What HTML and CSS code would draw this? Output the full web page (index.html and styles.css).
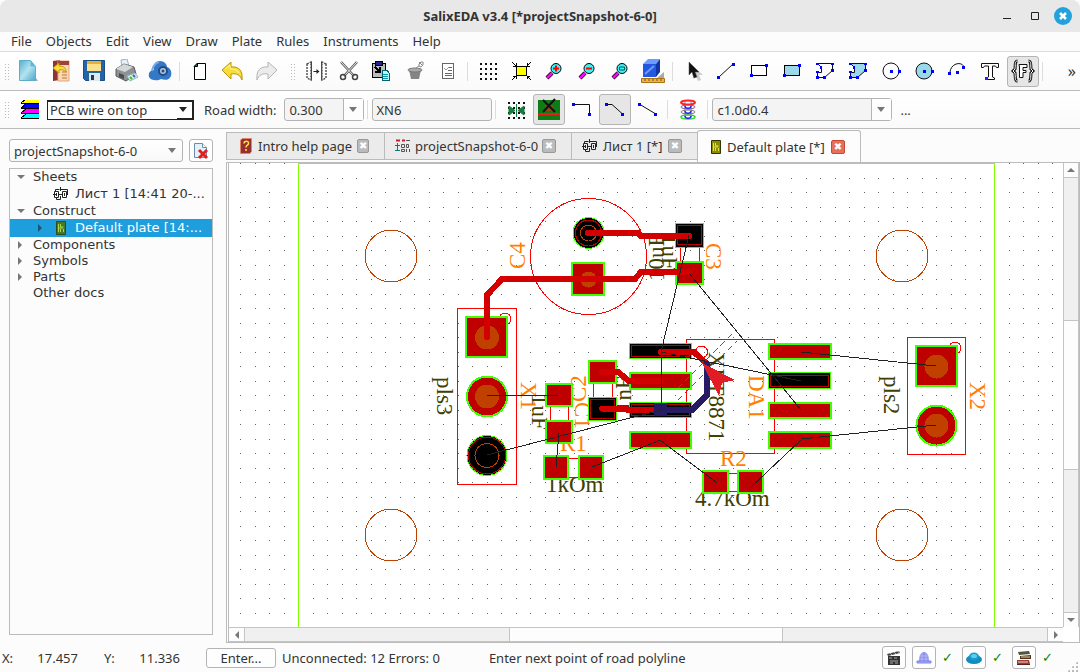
FILE: index.html
```html
<!DOCTYPE html>
<html lang="en">
<head>
<meta charset="UTF-8">
<meta name="viewport" content="width=device-width, initial-scale=1.0">
<title>SalixEDA v3.4 [*projectSnapshot-6-0]</title>
<link rel="stylesheet" href="styles.css">
</head>
<body>
<div class="window">

  <header class="titlebar">
    <h1>SalixEDA v3.4 [*projectSnapshot-6-0]</h1>
    <div class="window-buttons">
      <button type="button" aria-label="Minimize"><svg width="20" height="20"><path d="M6 12.500h8" stroke="#222" fill="none"/></svg></button>
      <button type="button" aria-label="Maximize"><svg width="20" height="20"><path d="M6.500 6.500h7v7h-7z" stroke="#222" fill="none"/></svg></button>
      <button type="button" aria-label="Close"><svg width="20" height="20"><circle cx="10" cy="10" r="9" fill="#22a2dd"/><path d="M7 7l6 6M13 7l-6 6" stroke="#fff" stroke-width="2.500"/></svg></button>
    </div>
  </header>

  <nav class="menubar">
    <button type="button">File</button>
    <button type="button">Objects</button>
    <button type="button">Edit</button>
    <button type="button">View</button>
    <button type="button">Draw</button>
    <button type="button">Plate</button>
    <button type="button">Rules</button>
    <button type="button">Instruments</button>
    <button type="button">Help</button>
  </nav>

  <!-- Main toolbar -->
  <div class="toolbar">
    <span class="grip"></span>
    <button type="button" class="tool" aria-label="New"><svg viewBox="0 0 24 24"><defs><linearGradient id="gNew" x1="0" y1="0" x2="1" y2="1"><stop offset="0" stop-color="#58aecb"/><stop offset=".5" stop-color="#b4e3ef"/><stop offset="1" stop-color="#4ca5cc"/></linearGradient></defs><path d="M5 22h17l-2-3z" fill="#aaa"/><path d="M3.500 1.500h11l5 6v14h-16z" fill="url(#gNew)" stroke="#5cadc9"/><path d="M14.500 1.500v6h5z" fill="#5ab8dc"/></svg></button>
    <button type="button" class="tool" aria-label="Open"><svg viewBox="0 0 24 24"><path d="M4 2l7-1v20l-7 1z" fill="#8e3434"/><path d="M9 2h11v20H9z" fill="#f3dcb2" stroke="#e9a27c"/><path d="M9 2h11v4H9z" fill="#9c4438"/><path d="M13 13h5M13 16h5M13 19h5" stroke="#c96b3a"/><path d="M4 9l6-5v3c5 0 7 2 7 6-2-2-4-3-7-2v3z" fill="#ffe135" stroke="#c9921a"/></svg></button>
    <button type="button" class="tool" aria-label="Save"><svg viewBox="0 0 24 24"><path d="M1.500 1.500h21v20h-19l-2-2z" fill="#2465a8" stroke="#1c4d84"/><path d="M5 2h14v10H5z" fill="#ffe08a"/><path d="M5 2h14v3H5z" fill="#e0b23c"/><path d="M7 14h11v8H7z" fill="#dfe8ee"/><path d="M9 16h3v5H9z" fill="#26384e"/></svg></button>
    <button type="button" class="tool" aria-label="Print"><svg viewBox="0 0 24 24"><path d="M6 1l6-1 2 7-7 2z" fill="#e8f1f8" stroke="#95b4cc"/><path d="M1 10l8-5 10 3 2 7-10 7-10-5z" fill="#8e9294" stroke="#55595b"/><path d="M1 10l8-5 9 3-8 5z" fill="#d5d8d9"/><path d="M4 14l5 2v4l-5-2z" fill="#4a4d4f"/><path d="M12 17l8-3 3 4-8 4z" fill="#dbe9ef" stroke="#8ba"/><path d="M15 18l2 2" stroke="#36bd35" stroke-width="2"/><path d="M18 16l2 2" stroke="#5656dd" stroke-width="2"/></svg></button>
    <button type="button" class="tool" aria-label="Cloud"><svg viewBox="0 0 24 24"><path d="M1 18c-1-5 2-7 5-7C5 5 8 2 12 2c4 0 7 3 7 6 4 1 5 6 4 9-2 5-7 4-10 3-3 2-10 2-12-2z" fill="#3478c8"/><path d="M4 12c1-6 3-8 7-9" stroke="#75aae2" stroke-width="2" fill="none"/><circle cx="15" cy="12" r="4" fill="#b3c8dd" stroke="#234c82" stroke-width="2"/><circle cx="15" cy="12" r="1.500" fill="#234c82"/></svg></button>
    <span class="sep"></span>
    <button type="button" class="tool" aria-label="Blank page"><svg viewBox="0 0 24 24"><path d="M9.500 4.500h8v16h-11v-13z" fill="#fff" stroke="#000"/><path d="M6 7.500L9.500 4v3.500z" fill="#087f7f" stroke="#000"/></svg></button>
    <button type="button" class="tool" aria-label="Undo"><svg viewBox="0 0 24 24"><path d="M1 11l9-8v5c8-1 12 4 11 13-2-5-5-7-11-6v5z" fill="#f8dd35" stroke="#b99308"/><path d="M4 10l5-4v4c5 0 7 1 9 4" stroke="#fff6a0" fill="none"/></svg></button>
    <button type="button" class="tool" aria-label="Redo"><svg viewBox="0 0 24 24"><path d="M23 11l-9-8v5C6 7 2 12 3 21c2-5 5-7 11-6v5z" fill="#ececec" stroke="#b4b4b4"/></svg></button>
    <span class="grip"></span>
    <button type="button" class="tool" aria-label="Mirror"><svg viewBox="0 0 24 24"><path d="M3 5l4-2v18l-4-2z" fill="none" stroke="#555" stroke-width="1.500" stroke-dasharray="2 1"/><path d="M7.500 3v18M17.500 3v18" stroke="#444"/><path d="M22 5l-4-2v18l4-2z" fill="none" stroke="#555" stroke-width="1.500" stroke-dasharray="2 1"/><path d="M9.500 12.500h4" stroke="#222"/><path d="M12.500 10l3 2.500-3 2.500z" fill="#222"/></svg></button>
    <button type="button" class="tool" aria-label="Cut"><svg viewBox="0 0 24 24"><path d="M4 3l13 14M20 3L7 17" stroke="#555" stroke-width="2.500"/><path d="M4 3l13 14M20 3L7 17" stroke="#eee" stroke-width="1"/><circle cx="6" cy="18" r="2.500" fill="none" stroke="#444" stroke-width="1.500"/><circle cx="18" cy="18" r="2.500" fill="none" stroke="#444" stroke-width="1.500"/></svg></button>
    <button type="button" class="tool" aria-label="Paste"><svg viewBox="0 0 24 24" shape-rendering="crispEdges"><path d="M2 4h13v14H2z" fill="#bdbdbd" stroke="#000"/><path d="M5 2h7v4H5z" fill="#23238e" stroke="#000"/><path d="M5 8l4 4M10 8v5H5" stroke="#000" stroke-width="2" fill="none"/><path d="M12 11h5l2 3v7h-7z" fill="#b9f5fa" stroke="#00646e"/><path d="M13 15h5M13 17h5M13 19h5" stroke="#0a9ab0"/></svg></button>
    <button type="button" class="tool" aria-label="Delete"><svg viewBox="0 0 24 24"><path d="M6 11h12l-2 9H8z" fill="#858585"/><ellipse cx="12" cy="11" rx="7" ry="2" fill="#aaa" stroke="#777"/><path d="M13 9l3-2M16 5l2-2h2v3l-2 2-2-1zM16 3l4 4" fill="none" stroke="#888"/></svg></button>
    <button type="button" class="tool" aria-label="Properties"><svg viewBox="0 0 24 24" shape-rendering="crispEdges"><path d="M6.500 4.500h11v15h-11z" fill="#fff" stroke="#666"/><path d="M12 8.500h4M12 11.500h4M9 14.500h7M9 16.500h7" stroke="#666"/><path d="M8 9l2 2 3-3" fill="none" stroke="#999"/></svg></button>
    <span class="sep"></span>
    <button type="button" class="tool" aria-label="Grid"><svg viewBox="0 0 24 24"><path d="M4 5h17M4 10h17M4 15h17M4 20h17" stroke="#111" stroke-width="2" stroke-dasharray="2 3"/></svg></button>
    <button type="button" class="tool" aria-label="Fit"><svg viewBox="0 0 24 24" shape-rendering="crispEdges"><path d="M7.500 7.500h10v9h-10z" fill="#ff0" stroke="#000"/><path d="M3 3l4 4M22 3l-4 4M3 21l4-4M22 21l-4-4M4 7h3V4M18 4v3h3M4 17h3v3M21 17h-3v3" stroke="#000" fill="none"/></svg></button>
    <button type="button" class="tool" aria-label="Zoom in"><svg viewBox="0 0 24 24"><path d="M10 14l-5 5" stroke="#000" stroke-width="4"/><path d="M10 14l-5 5" stroke="#f0f" stroke-width="2.500"/><circle cx="14" cy="9.500" r="5" fill="#3df2f6" stroke="#000"/><path d="M11 9.500h6M14 6.500v6" stroke="#f00" stroke-width="2"/></svg></button>
    <button type="button" class="tool" aria-label="Zoom out"><svg viewBox="0 0 24 24"><path d="M10 14l-5 5" stroke="#000" stroke-width="4"/><path d="M10 14l-5 5" stroke="#f0f" stroke-width="2.500"/><circle cx="14" cy="9.500" r="5" fill="#3df2f6" stroke="#000"/><path d="M11 9.500h6" stroke="#f00" stroke-width="2"/></svg></button>
    <button type="button" class="tool" aria-label="Zoom area"><svg viewBox="0 0 24 24"><path d="M10 14l-5 5" stroke="#000" stroke-width="4"/><path d="M10 14l-5 5" stroke="#f0f" stroke-width="2.500"/><circle cx="14" cy="9.500" r="5" fill="#3df2f6" stroke="#000"/><path d="M11.500 8h5v3h-5z" stroke="#055" fill="#3df2f6"/></svg></button>
    <button type="button" class="tool" aria-label="3D view"><svg viewBox="0 0 24 24"><path d="M16 19l7-6v6z" fill="#aaa"/><path d="M2 5l5-5h12l-4 5z" fill="#6c9cff"/><path d="M2 5h13v13H2z" fill="#2458e0"/><path d="M15 5l4-5v13l-4 5z" fill="#1036a4"/><path d="M4 15L13 7" stroke="#6e9af5" stroke-width="2"/><path d="M.500 19.500h23v4H.500z" fill="#f0b43c" stroke="#a87414"/><path d="M4 20v2M8 20v2M12 20v2M16 20v2M20 20v2" stroke="#744"/></svg></button>
    <span class="sep"></span>
    <button type="button" class="tool" aria-label="Select"><svg viewBox="0 0 24 24"><path d="M11 6l1 14 3-3 2 5 3-1-2-5h4z" fill="#ccc"/><path d="M8 3v13l3-3 2 6 3-1-2-5h4z" fill="#111" stroke="#555" stroke-width=".500"/></svg></button>
    <button type="button" class="tool" aria-label="Line"><svg viewBox="0 0 24 24"><path d="M5 18L19 5" stroke="#111"/><path d="M3 17h3v3H3zM18 4h3v3h-3z" fill="#00f"/></svg></button>
    <button type="button" class="tool" aria-label="Rectangle"><svg viewBox="0 0 24 24" shape-rendering="crispEdges"><path d="M4.500 6.500h15v10h-15z" fill="#fff" stroke="#000"/><path d="M3 15h3v3H3zM18 5h3v3h-3z" fill="#00f"/></svg></button>
    <button type="button" class="tool" aria-label="Filled rectangle"><svg viewBox="0 0 24 24" shape-rendering="crispEdges"><path d="M4.500 6.500h15v10h-15z" fill="#99d9ea" stroke="#000"/><path d="M3 15h3v3H3zM18 5h3v3h-3z" fill="#00f"/></svg></button>
    <button type="button" class="tool" aria-label="Polygon"><svg viewBox="0 0 24 24"><path d="M4.500 4.500h15v7l-8 7h-7v-5h4v-5z" fill="none" stroke="#111"/><path d="M3 4h3v2H3zM18 4h3v2h-3zM18 10h3v3h-3zM10 17h3v3h-3zM3 17h3v3H3zM3 12h3v2H3zM7 7h2v3H7z" fill="#00f"/></svg></button>
    <button type="button" class="tool" aria-label="Filled polygon"><svg viewBox="0 0 24 24"><path d="M4.500 4.500h15v7l-8 7h-7v-5h4v-5z" fill="#99d9ea" stroke="#111"/><path d="M3 4h3v2H3zM18 4h3v2h-3zM18 10h3v3h-3zM10 17h3v3h-3zM3 17h3v3H3zM3 12h3v2H3zM7 7h2v3H7z" fill="#00f"/></svg></button>
    <button type="button" class="tool" aria-label="Circle"><svg viewBox="0 0 24 24"><circle cx="12" cy="12" r="8" fill="none" stroke="#111"/><path d="M11 11h3v3h-3zM19 11h3v3h-3z" fill="#00f"/></svg></button>
    <button type="button" class="tool" aria-label="Filled circle"><svg viewBox="0 0 24 24"><circle cx="12" cy="12" r="8" fill="#99d9ea" stroke="#111"/><path d="M11 11h3v3h-3zM19 11h3v3h-3z" fill="#00f"/></svg></button>
    <button type="button" class="tool" aria-label="Arc"><svg viewBox="0 0 24 24"><path d="M5 13c1-9 12-11 14-5" fill="none" stroke="#111"/><path d="M3 13h3v3H3zM11 12h3v3h-3zM17 7h3v3h-3z" fill="#00f"/></svg></button>
    <button type="button" class="tool" aria-label="Text"><svg viewBox="0 0 24 24"><path d="M3.500 4.500h17v4h-2l-1-1.500h-3v11l2 1v1.500h-8V19l2-1V7h-4l-1 1.500h-2z" fill="#fff" stroke="#111"/><path d="M7 18h3v3H7z" fill="#22f"/></svg></button>
    <button type="button" class="tool checked" aria-label="Functional text"><svg viewBox="0 0 24 24"><path d="M6.500 2c-3 0-2 4-2.500 8l-2 2 2 2c.500 4-.500 8 2.500 8M17.500 2c3 0 2 4 2.500 8l2 2-2 2c-.500 4 .500 8-2.500 8" fill="none" stroke="#111" stroke-width="3"/><path d="M6.500 2c-3 0-2 4-2.500 8l-2 2 2 2c.500 4-.500 8 2.500 8M17.500 2c3 0 2 4 2.500 8l2 2-2 2c-.500 4 .500 8-2.500 8" fill="none" stroke="#fff" stroke-width="1"/><path d="M8 5.500h8v3h-4v3h3v2h-3v5H8.500V8z" fill="#fff" stroke="#111"/></svg></button>
    <span class="sep"></span>
    <button type="button" class="more" aria-label="More">»</button>
  </div>

  <!-- Wire options toolbar -->
  <div class="toolbar options">
    <span class="grip"></span>
    <svg class="layers" width="18" height="20" shape-rendering="crispEdges"><path d="M3 0h15v3H0z" fill="#ff0"/><path d="M3 4h15v4H0z" fill="#00f"/><path d="M3 9h15v4H0z" fill="#f0f"/><path d="M3 14h15v4H0z" fill="#0ff"/><path d="M0 3h18M0 8h18M0 13h18M0 18h18M4 0L0 3M5 4L0 8M5 9l-5 4M5 14l-5 4" stroke="#000" fill="none"/></svg>
    <label class="combo motif"><select aria-label="Layer"><option>PCB wire on top</option></select></label>
    <label class="caption" for="roadWidth">Road width:</label>
    <span class="combo split width-combo"><select id="roadWidth"><option>0.300</option></select></span>
    <span class="sep"></span>
    <input class="net-name" type="text" value="XN6" aria-label="Net name">
    <span class="sep"></span>
    <button type="button" class="tool" aria-label="Snap to grid"><svg viewBox="0 0 24 24"><path d="M4 5h17M4 10h17M4 15h17M4 20h17" stroke="#111" stroke-width="2" stroke-dasharray="2 3"/><path d="M12.500 6v13M5 8l6 4.500L5 17zM20 8l-6 4.500 6 4.500z" fill="#187c3c" stroke="#187c3c"/></svg></button>
    <button type="button" class="tool checked" aria-label="Destroy wires"><svg viewBox="0 0 24 24"><path d="M1 2h22v20H1z" fill="#0c7c14"/><path d="M8 7h8v6H8z" fill="#8c4a14"/><path d="M1 16h22" stroke="#f01818" stroke-width="2"/><path d="M6 2l12 12M18 1L6 14" stroke="#111" stroke-width="2"/></svg></button>
    <button type="button" class="tool" aria-label="Orthogonal"><svg viewBox="0 0 24 24"><path d="M4 6.500h15.500V17" fill="none" stroke="#111"/><path d="M2 5h3v3H2zM18 15h3v3h-3z" fill="#00f"/></svg></button>
    <button type="button" class="tool checked" aria-label="45 degree"><svg viewBox="0 0 24 24"><path d="M4 6.500h5l10 9" fill="none" stroke="#111"/><path d="M2 5h3v3H2zM18 15h3v3h-3z" fill="#00f"/></svg></button>
    <button type="button" class="tool" aria-label="Any angle"><svg viewBox="0 0 24 24"><path d="M4 6.500l15 9" fill="none" stroke="#111"/><path d="M2 5h3v3H2zM18 15h3v3h-3z" fill="#00f"/></svg></button>
    <span class="sep"></span>
    <button type="button" class="tool" aria-label="Via"><svg viewBox="0 0 24 24" fill="none"><path d="M9 4v15M15 4v15" stroke="#888"/><ellipse cx="12" cy="19" rx="7" ry="2" stroke="#1fd828" stroke-width="1.500"/><ellipse cx="12" cy="14" rx="7" ry="2" stroke="#777"/><ellipse cx="12" cy="9" rx="7" ry="2" stroke="#806090"/><path d="M9 8c0 3 6 3 6 0M9 13c0 3 6 3 6 0M9 18c0 3 6 3 6 0" stroke="#22f" stroke-width="1.500"/><ellipse cx="12" cy="4.500" rx="7" ry="2" stroke="#f22" stroke-width="2"/></svg></button>
    <span class="sep"></span>
    <span class="combo split via-combo"><select aria-label="Via type"><option>c1.0d0.4</option></select></span>
    <button type="button" class="dots" aria-label="Choose via">...</button>
  </div>

  <main class="workspace">
    <aside class="project">
      <div class="project-bar">
        <label class="combo project-combo"><select aria-label="Project"><option>projectSnapshot-6-0</option></select></label>
        <button type="button" class="close-project" aria-label="Close project"><svg width="18" height="18"><path d="M2.500 1.500h8l4 4v10h-12z" fill="#e3f1fa" stroke="#6d8cab"/><path d="M10.500 1.500v4h4" fill="#fff" stroke="#6d8cab"/><path d="M7 8l8 8M15 8l-8 8" stroke="#e02020" stroke-width="3"/></svg></button>
      </div>
      <ul class="tree">
        <li><i class="arrow open"></i>Sheets</li>
        <li class="child"><i class="arrow"></i><svg width="16" height="14" fill="none" stroke="#222"><path d="M1.500 4.500h4v6h-4zM9.500 4.500h4v6h-4zM0 7.500h3M5 7.500h5M2.500 4V2.500h4M8 2.500h6.500V8M3.500 11v1.500h4V9M7.500 0v4"/><path d="M3.500 6v3M11.500 6v3"/></svg>Лист 1 [14:41 20-...</li>
        <li><i class="arrow open"></i>Construct</li>
        <li class="child selected"><i class="arrow closed"></i><svg width="16" height="14"><path d="M3.500.500h9v13h-9z" fill="#46782c" stroke="#2d4a18"/><path d="M5.500 3v8M7.500 3v3h3M7.500 8v3M10.500 8v3M6 7h4" stroke="#a9d84a" fill="none"/></svg>Default plate [14:...</li>
        <li><i class="arrow closed"></i>Components</li>
        <li><i class="arrow closed"></i>Symbols</li>
        <li><i class="arrow closed"></i>Parts</li>
        <li><i class="arrow"></i>Other docs</li>
      </ul>
    </aside>

    <section class="editor">
      <div class="tabs">
        <div class="tab tab-intro"><svg width="14" height="16"><path d="M1.500 2l2-1.500h9v13l-1.500 2H1.500z" fill="#963030" stroke="#d88868"/><path d="M5 5.500c0-3 5-3 4.500 0C9.500 7.500 7 7 7 9.500M7 11v2" stroke="#ffe040" stroke-width="1.500" fill="none"/></svg><a href="#">Intro help page</a><button type="button" class="tab-close" aria-label="Close tab">✖</button></div>
        <div class="tab tab-project"><svg width="16" height="16" fill="none"><path d="M1 2.500h4M7 2.500h3" stroke="#c02030" stroke-width="2"/><path d="M2.500 5v8M0 7.500h5M0 12.500h5" stroke="#087878"/><path d="M6.500 6.500h3v3h-3zM11.500 6.500h2v3h-2zM6.500 11.500h3v2h-3zM11.500 11v3M14.500 11v3M11 2.500h4" stroke="#555"/></svg><a href="#">projectSnapshot-6-0</a><button type="button" class="tab-close" aria-label="Close tab">✖</button></div>
        <div class="tab tab-sheet"><svg width="16" height="14" fill="none" stroke="#222"><path d="M1.500 4.500h4v6h-4zM9.500 4.500h4v6h-4zM0 7.500h3M5 7.500h5M2.500 4V2.500h4M8 2.500h6.500V8M3.500 11v1.500h4V9M7.500 0v4"/><path d="M3.500 6v3M11.500 6v3"/></svg><a href="#">Лист 1 [*]</a><button type="button" class="tab-close" aria-label="Close tab">✖</button></div>
        <div class="tab tab-plate active"><svg width="12" height="16"><path d="M1.500 1.500h9v13h-9z" fill="#8c8c00" stroke="#333300"/><path d="M3.500 4v8M5.500 4v3h3M5.500 9v3M8.500 9v3M4 8h4" stroke="#e8e83c" fill="none"/></svg><a href="#">Default plate [*]</a><button type="button" class="tab-close" aria-label="Close tab">✖</button></div>
      </div>

      <div class="view">
        <svg class="board">
          <defs>
            <pattern id="grid" width="29" height="29" patternUnits="userSpaceOnUse" x="240" y="178">
              <path d="M0 0h1v1H0zM15 0h1v1h-1zM0 14h1v1H0zM15 14h1v1h-1z" fill="#666"/>
            </pattern>
          </defs>
          <g transform="translate(-229 -163)">
            <rect x="229" y="163" width="100%" height="100%" fill="url(#grid)"/>

            <!-- Plate contour and mounting holes -->
            <path class="contour" d="M298.500 1200V163.500H994.500V1200"/>
            <g class="hole">
              <circle cx="391" cy="256" r="26"/><circle cx="902" cy="256" r="26"/>
              <circle cx="391" cy="535" r="26"/><circle cx="902" cy="535" r="26"/>
            </g>

            <!-- Component outlines -->
            <g class="outline">
              <circle cx="588.500" cy="256.500" r="58"/>
              <path d="M457.500 308.500h59v176h-59zM907.500 337.500h58v117h-58zM686.500 339.500h88v114h-88z"/>
              <path d="M680.500 248v13M699.500 248v13M550.500 407v13M568.500 407v13M593.500 384v13M612.500 384v13M569 458.500h9M569 477.500h9M729 473.500h8M729 491.500h8"/>
              <circle cx="505" cy="319" r="6"/><circle cx="955" cy="348" r="6"/><circle cx="701.500" cy="352" r="6"/>
            </g>

            <!-- Reference names -->
            <g class="ref">
              <text transform="translate(525 269) rotate(-90)">C4</text>
              <text transform="translate(706 243) rotate(90)">C3</text>
              <text transform="translate(521 382) rotate(90)">X1</text>
              <text transform="translate(586 402) rotate(-90)">C2</text>
              <text transform="translate(575 402) rotate(90)">C1</text>
              <text transform="translate(749 375) rotate(90)">DA1</text>
              <text transform="translate(970 382) rotate(90)">X2</text>
              <text x="560" y="451">R1</text>
              <text x="720" y="466">R2</text>
            </g>

            <!-- Nominals -->
            <g class="nominal">
              <text transform="translate(664 281) rotate(-90)">10uF</text>
              <text transform="translate(662 234) rotate(90)">1uF</text>
              <text transform="translate(437 377) rotate(90)">pls3</text>
              <text transform="translate(532 394) rotate(90)">1uF</text>
              <text transform="translate(631 412) rotate(-90)">1nF</text>
              <text transform="translate(709 352) rotate(90)">XPT8871</text>
              <text transform="translate(884 376) rotate(90)">pls2</text>
              <text x="546" y="492">1kOm</text>
              <text x="695" y="506">4.7kOm</text>
            </g>

            <!-- Pads -->
            <g class="pad">
              <rect x="572" y="263" width="32" height="32"/>
              <rect x="676" y="262" width="27" height="22"/>
              <rect x="466" y="317" width="41" height="40"/>
              <circle cx="487" cy="396.500" r="20"/>
              <rect x="546" y="384" width="26" height="22"/>
              <rect x="546" y="421" width="26" height="22"/>
              <rect x="589" y="361" width="27" height="22"/>
              <rect x="544" y="456" width="24" height="23"/>
              <rect x="579" y="456" width="24" height="23"/>
              <rect x="703" y="471" width="25" height="22"/>
              <rect x="738" y="471" width="25" height="22"/>
              <rect x="630" y="373" width="61" height="16"/>
              <rect x="630" y="432" width="61" height="16"/>
              <rect x="769" y="344" width="62" height="15"/>
              <rect x="769" y="403" width="62" height="15"/>
              <rect x="769" y="432" width="62" height="16"/>
              <rect x="916" y="346" width="41" height="40"/>
              <circle cx="936.500" cy="425.500" r="20"/>
            </g>
            <g class="drill">
              <circle cx="588.500" cy="279.500" r="8"/><circle cx="487" cy="337.500" r="12"/><circle cx="487" cy="396.500" r="12"/>
              <circle cx="936.500" cy="366.500" r="12"/><circle cx="936.500" cy="425.500" r="12"/>
            </g>

            <!-- Pads of the active net -->
            <g class="net-pad">
              <circle cx="588.500" cy="233" r="15.500"/>
              <circle cx="487" cy="455.500" r="20"/>
              <rect x="675.500" y="223.500" width="28" height="24"/>
              <rect x="588.500" y="397.500" width="28" height="23"/>
              <rect x="629.500" y="343.500" width="62" height="15"/>
              <rect x="629.500" y="402.500" width="62" height="15"/>
              <rect x="768.500" y="372.500" width="62" height="16"/>
            </g>
            <g class="net-ring">
              <circle cx="588.500" cy="233" r="13"/><circle cx="487" cy="455.500" r="18.500"/>
              <rect x="677.500" y="225.500" width="24" height="19"/>
              <rect x="590.500" y="399.500" width="24" height="19"/>
              <rect x="631.500" y="345.500" width="58" height="11"/>
              <rect x="631.500" y="404.500" width="58" height="11"/>
              <rect x="770.500" y="375.500" width="58" height="11"/>
            </g>
            <g class="hole"><circle cx="588.500" cy="233" r="8"/><circle cx="487" cy="455.500" r="12"/></g>

            <!-- Routed wires -->
            <g class="wire">
              <path d="M588 233h50l3 3h48M487 337v-42l15-16h133l6-7h48"/>
              <path d="M602 372h16l11 9h32M602 408.500h22l4 1.500h33M661 352h33l13 12"/>
              <path class="bottom" d="M661 410h31l15-15v-31"/>
            </g>
            <path d="M654 403h13v13h-13z" fill="#261b64"/>
            <path d="M678 388l57-57M678 400l59-59" stroke="#c02850" stroke-dasharray="6 4"/>

            <!-- Unrouted connections -->
            <path class="rats" d="M689 235L661 352v58M689 273l112 137M661 352l140 29M801 352l135 14M801 439l135-14M660 440l57 43M801 440l-51 48M592 467l69-27M487 455l174-45M487 396l72-1M559 433l-3 34"/>
            <path d="M702 363l33 17-13 3-3 13z" fill="#e01c24"/>
          </g>
        </svg>
        <div class="vbar"><button type="button" aria-label="Scroll up"><i class="up"></i></button><span class="track"></span><button type="button" aria-label="Scroll down"><i class="down"></i></button></div>
        <div class="hbar"><button type="button" aria-label="Scroll left"><i class="left"></i></button><span class="track"></span><button type="button" aria-label="Scroll right"><i class="right"></i></button></div>
      </div>
    </section>
  </main>

  <footer class="status">
    <span class="coord"><span>X:</span><span>17.457</span></span>
    <span class="coord"><span>Y:</span><span>11.336</span></span>
    <button type="button" class="enter">Enter...</button>
    <span>Unconnected: 12 Errors: 0</span>
    <span class="hint">Enter next point of road polyline</span>
    <div class="indicators">
      <button type="button" aria-label="Video"><svg width="16" height="16"><path d="M2 6h12v9H2z" fill="#333"/><path d="M1 4l12-3 1 2-12 3z" fill="#444"/><path d="M4 3l2 2M8 2l2 2M12 1l1 2M3 8h3M8 8h3M4 11h8M4 13h3M9 13h3" stroke="#ddd" stroke-width=".700"/></svg></button>
      <button type="button" aria-label="Server"><svg width="16" height="16"><path d="M3 11c0-12 10-12 10 0z" fill="#8c90ec"/><path d="M1 11h14v2H1z" fill="#a4a8f4" stroke="#7f83e8"/><path d="M6 3v8M10 3v8M3 6h10M3 9h10" stroke="#d4d6ff" stroke-width=".500"/></svg></button>
      <span class="ok">✓</span>
      <button type="button" aria-label="Cloud sync"><svg width="16" height="16"><ellipse cx="8" cy="9.500" rx="8" ry="4.500" fill="#0f8cc0"/><ellipse cx="8" cy="6.500" rx="5" ry="4" fill="#1c9ccc"/><ellipse cx="8" cy="6" rx="3" ry="2" fill="#5cd0ea"/></svg></button>
      <span class="ok">✓</span>
      <button type="button" aria-label="Library"><svg width="16" height="16"><path d="M2 2l11-1 1 3-11 1z" fill="#4c5638"/><path d="M4 6l11-1v4L4 9z" fill="#4a3420"/><path d="M5 7h9" stroke="#ecdca4"/><path d="M1 10l12 0 1 4H1z" fill="#a23830"/><path d="M2 12h10" stroke="#f0d8c0"/><path d="M1 14.500h13" stroke="#522"/></svg></button>
      <span class="ok">✓</span>
    </div>
    <span class="size-grip"></span>
  </footer>
</div>
</body>
</html>
```

FILE: styles.css
```css
* {
  box-sizing: border-box;
}
body {
  margin: 0;
  background: #fcfcfc;
  color: #333;
  font: 13px/16px "Noto Sans", "Open Sans", sans-serif;
}
button, input, select {
  font: inherit;
  color: inherit;
  margin: 0;
  padding: 0;
  border: 0;
  background: none;
}
a {
  color: inherit;
  text-decoration: none;
}
svg {
  display: block;
  flex: none;
}
.window {
  display: flex;
  flex-direction: column;
  height: 100vh;
}

/* Title and menu */
.titlebar {
  display: grid;
  grid-template-columns: 1fr auto 1fr;
  align-items: center;
  height: 32px;
  background: #e8e8e8;
  border-radius: 8px 8px 0 0;
}
.titlebar h1 {
  grid-column: 2;
  margin: 0;
  font-size: 13px;
}
.window-buttons {
  display: flex;
  gap: 8px;
  justify-self: end;
  padding-right: 7px;
}
.menubar {
  display: flex;
  align-items: flex-start;
  gap: 14px;
  height: 20px;
  padding: 1px 11px 0;
  border-bottom: 1px solid #dcdcdc;
}

/* Toolbars */
.toolbar {
  display: flex;
  align-items: center;
  gap: 1px;
  height: 39px;
  border-bottom: 1px solid #bbb;
  background: linear-gradient(#fff, #fafafa);
}
.grip {
  flex: none;
  width: 5px;
  height: 17px;
  margin: 0 2px 0 4px;
  background: radial-gradient(circle, #bbb 1px, transparent 1px) 0 0 / 3px 3px;
}
.tool + .grip {
  margin: 0 4px 0 7px;
}
.sep {
  flex: none;
  width: 2px;
  height: 19px;
  margin: 0 2px;
  border-left: 1px solid #ddd;
}
.tool {
  display: grid;
  place-items: center;
  flex: none;
  width: 32px;
  height: 31px;
}
.tool svg {
  width: 24px;
  height: 24px;
}
.checked {
  border: 1px solid #b4b4b4;
  border-radius: 3px;
  background: #e6e6e6;
}
.more {
  margin: 0 4px 0 auto;
  font-size: 16px;
}
.options {
  height: 38px;
}
.layers {
  margin: 0 7px 0 9px;
}
.combo {
  position: relative;
  display: block;
}
.combo select {
  display: block;
  width: 100%;
  height: 23px;
  padding: 0 4px;
  appearance: none;
  border: 1px solid #b4b4b4;
  border-radius: 3px;
  background: linear-gradient(#fff, #f8f8f8);
}
.combo::after {
  content: "";
  position: absolute;
  right: 7px;
  top: 9px;
  border: 4px solid transparent;
  border-top: 5px solid #777;
  border-bottom: 0;
  pointer-events: none;
}
.split::before {
  content: "";
  position: absolute;
  right: 1px;
  top: 1px;
  width: 19px;
  height: 21px;
  border-left: 1px solid #b4b4b4;
  background: #fdfdfd;
  pointer-events: none;
}
.split select {
  background: #f4f4f4;
}
.motif {
  width: 147px;
}
.motif select {
  height: 20px;
  padding: 0 2px;
  border: 1px solid #222;
  border-top-width: 2px;
  border-radius: 0;
  background: #fff;
}
.motif::after {
  top: 7px;
  border-top-color: #222;
}
.motif::before {
  content: "";
  position: absolute;
  right: 1px;
  bottom: 1px;
  width: 15px;
  height: 16px;
  border: 1px solid #222;
  border-width: 0 1px 1px 0;
  pointer-events: none;
}
.caption {
  margin: 0 7px 0 9px;
}
.width-combo {
  width: 80px;
}
.net-name {
  width: 120px;
  height: 23px;
  padding: 0 3px;
  border: 1px solid #b4b4b4;
  border-radius: 3px;
  background: #f4f4f4;
}
.via-combo {
  width: 180px;
}
.dots {
  margin-left: 7px;
}

/* Project tree */
.workspace {
  display: flex;
  flex: 1;
  min-height: 0;
}
.project {
  display: flex;
  flex-direction: column;
  gap: 6px;
  width: 226px;
  padding: 10px 13px 8px 9px;
}
.project-bar {
  display: flex;
  gap: 6px;
}
.project-combo {
  flex: 1;
}
.close-project, .indicators button {
  display: grid;
  place-items: center;
  width: 24px;
  height: 23px;
  border: 1px solid #b4b4b4;
  border-radius: 3px;
  background: #fefefe;
}
.tree {
  flex: 1;
  margin: 0;
  padding: 0;
  border: 1px solid #bbb;
  list-style: none;
  font-family: "DejaVu Sans", sans-serif;
}
.tree li {
  display: flex;
  align-items: center;
  height: 16px;
  white-space: nowrap;
}
.tree .child {
  height: 18px;
  padding-left: 20px;
}
.tree .child svg {
  margin-right: 6px;
}
.selected {
  background: #1f9ede;
  color: #fff;
}
.arrow {
  width: 23px;
  height: 8px;
}
.arrow::before {
  content: "";
  display: block;
  margin-left: 7px;
}
.open::before {
  width: 0;
  margin-top: 2px;
  border: 4px solid transparent;
  border-top-color: #777;
  border-bottom: 0;
}
.closed::before {
  width: 0;
  margin-left: 8px;
  border: 4px solid transparent;
  border-left-color: #777;
  border-right: 0;
}
.selected .closed::before {
  border-left-color: #1b5478;
}

/* Tabs */
.editor {
  display: flex;
  flex-direction: column;
  flex: 1;
  min-width: 0;
}
.tabs {
  display: flex;
  align-items: flex-end;
  height: 33px;
  padding-top: 2px;
}
.tab {
  display: flex;
  align-items: center;
  gap: 5px;
  height: 28px;
  margin-bottom: 2px;
  padding: 0 15px 0 12px;
  border: 1px solid #bbb;
  border-right: 0;
  background: #ebebeb;
  white-space: nowrap;
}
.tab.active {
  height: 32px;
  margin-bottom: 0;
  border-right: 1px solid #bbb;
  border-bottom: 0;
  border-radius: 3px 3px 0 0;
  background: #fdfdfd;
}
.tab-intro {
  width: 158px;
}
.tab-project {
  width: 187px;
  padding-left: 10px;
  gap: 4px;
}
.tab-sheet {
  width: 126px;
  padding-left: 10px;
}
.tab-plate {
  width: 164px;
}
.tab-close {
  width: 14px;
  height: 14px;
  margin-left: auto;
  border: 1px solid #999;
  border-radius: 2px;
  background: #bbb;
  color: #fff;
  font: 10px/12px "DejaVu Sans", sans-serif;
}
.active .tab-close {
  border-color: #c84830;
  background: #e87058;
}

/* Plate view */
.view {
  display: grid;
  grid-template-columns: 1fr 16px;
  grid-template-rows: 1fr 15px;
  flex: 1;
  min-height: 0;
  border: 1px solid #bbb;
  border-left-width: 3px;
  border-left-style: double;
  background: #fff;
}
.board {
  width: 100%;
  height: 100%;
  shape-rendering: crispEdges;
}
.contour {
  fill: none;
  stroke: #80ff00;
}
.hole {
  fill: none;
  stroke: #c04000;
}
.outline {
  fill: none;
  stroke: #f00;
}
.ref, .nominal {
  font: 23px "Liberation Serif", serif;
}
.ref {
  fill: #ff8000;
}
.nominal {
  fill: #404000;
}
.pad {
  fill: #be0000;
  stroke: #40ff00;
  stroke-width: 2px;
}
.drill {
  fill: #c04000;
}
.net-pad {
  fill: #000;
  stroke: #40ff00;
}
.net-ring {
  fill: none;
  stroke: #be0000;
}
.wire {
  fill: none;
  stroke: #d20000;
  stroke-width: 6px;
  stroke-linecap: round;
  stroke-linejoin: round;
}
.bottom {
  stroke: #261b64;
}
.rats {
  fill: none;
  stroke: #222;
}
.vbar, .hbar {
  display: flex;
  border: 1px solid #c4c4c4;
  background: #f0f0f0;
}
.vbar {
  flex-direction: column;
  border-width: 0 1px;
}
.hbar {
  border-width: 1px 0;
}
.vbar button, .hbar button {
  display: grid;
  place-items: center;
  flex: none;
  width: 14px;
  height: 14px;
  background: #fdfdfd;
}
.hbar button {
  width: 15px;
  height: 13px;
}
.track {
  display: flex;
  align-items: center;
  justify-content: center;
  flex: 1;
  border: 0 solid #c4c4c4;
}
.track::before {
  content: "";
  border: 0 solid #c4c4c4;
  background: #fdfdfd;
}
.vbar .track, .vbar .track::before {
  border-width: 1px 0;
}
.vbar .track::before {
  width: 100%;
  height: 34%;
}
.hbar .track, .hbar .track::before {
  border-width: 0 1px;
}
.hbar .track::before {
  width: 34%;
  height: 100%;
}
.up, .down, .left, .right {
  border: 4px solid transparent;
}
.up {
  border-bottom-color: #777;
  border-top: 0;
}
.down {
  border-top-color: #777;
  border-bottom: 0;
}
.left {
  border-right-color: #777;
  border-left: 0;
}
.right {
  border-left-color: #777;
  border-right: 0;
}

/* Status bar */
.status {
  display: flex;
  align-items: center;
  height: 29px;
  padding: 0 2px;
}
.coord {
  display: flex;
  justify-content: space-between;
  width: 76px;
  margin-right: 26px;
}
.enter {
  width: 70px;
  height: 20px;
  margin-right: 6px;
  border: 1px solid #b4b4b4;
  border-radius: 3px;
  background: #fefefe;
}
.hint {
  margin-left: 49px;
}
.indicators {
  display: flex;
  align-items: center;
  gap: 6px;
  margin-left: auto;
}
.ok {
  width: 14px;
  color: #080;
  font-family: "DejaVu Sans", sans-serif;
}
.size-grip {
  align-self: flex-end;
  width: 11px;
  height: 11px;
  margin-left: 11px;
  background: radial-gradient(circle, #bbb 1px, transparent 1px) 0 0 / 4px 4px;
  clip-path: polygon(100% 0, 100% 100%, 0 100%);
}
```
